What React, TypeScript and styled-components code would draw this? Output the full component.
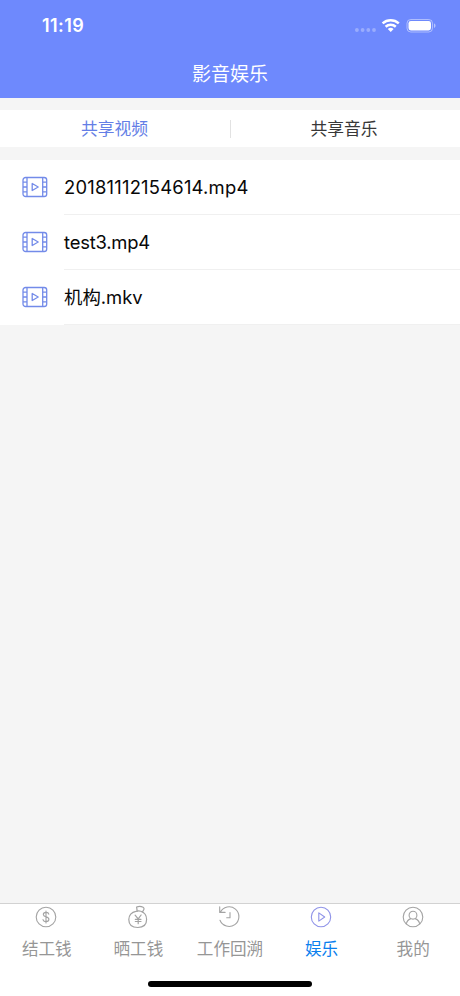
import React from 'react';
import styled, { createGlobalStyle } from 'styled-components';

const GlobalStyle = createGlobalStyle`
  * { box-sizing: border-box; }
  body { margin: 0; background: #f5f5f5; }
`;

const Screen = styled.div`
  width: 460px;
  height: 996px;
  display: flex;
  flex-direction: column;
  overflow: hidden;
  background: #f5f5f5;
  font-family: Inter, 'Noto Sans CJK SC', sans-serif;
  white-space: nowrap;
`;

const Header = styled.header`
  height: 98px;
  flex: none;
  background: #6e89fd;
  color: #fff;
`;

const StatusBar = styled.div`
  height: 50px;
  padding: 1px 24px 0 42px;
  display: flex;
  align-items: center;
  justify-content: space-between;
`;

const Clock = styled.span`
  font-size: 18px;
  line-height: 22px;
  font-weight: 600;
  letter-spacing: 0.4px;
`;

const Title = styled.h1`
  margin: 0;
  height: 48px;
  font-size: 19px;
  font-weight: 400;
  line-height: 49px;
  text-align: center;
`;

const Segments = styled.nav`
  flex: none;
  height: 37px;
  margin: 12px 0 13px;
  display: grid;
  grid-template-columns: 230px 1px 1fr;
  align-items: center;
  background: #fff;
`;

const Segment = styled.div<{ $active?: boolean }>`
  text-align: center;
  font-size: 16.8px;
  line-height: 35px;
  padding-top: 2px;
  padding-right: ${p => (p.$active ? '1px' : '3px')};
  color: ${p => (p.$active ? '#647ee6' : '#383838')};
`;

const Divider = styled.span`
  width: 1px;
  height: 18px;
  background: #e2e2e2;
`;

const FileList = styled.main`
  flex: none;
  background: #fff;
`;

const FileRow = styled.div`
  height: 55px;
  display: flex;
  align-items: stretch;
`;

const FileIcon = styled.span`
  width: 64px;
  padding: 16px 0 0 22px;
`;

const FileName = styled.span<{ $tracking: number }>`
  flex: 1;
  border-bottom: 1px solid #f0f0f0;
  font-size: 18.4px;
  line-height: 55px;
  letter-spacing: ${p => p.$tracking}px;
  color: #080808;
`;

const Footer = styled.footer`
  margin-top: auto;
  flex: none;
  height: 93px;
  border-top: 1px solid #d2d2d2;
  background: #fff;
`;

const TabRow = styled.nav`
  display: grid;
  grid-template-columns: repeat(5, 1fr);
  height: 77px;
  padding: 0 1px;
`;

const Tab = styled.div<{ $active?: boolean }>`
  display: flex;
  flex-direction: column;
  align-items: center;
  color: ${p => (p.$active ? '#0a80ee' : '#969696')};
  font-size: 16.6px;
  line-height: 24px;
  svg {
    margin: 1px 1px 8px 0;
    color: ${p => (p.$active ? '#8f93e8' : '#a3a3a3')};
  }
`;

const HomeBar = styled.div`
  width: 164px;
  height: 6px;
  margin: 0 auto;
  border-radius: 3px;
  background: #000;
`;

const StatusIcons = () => (
  <svg width="82" height="18" viewBox="0 0 82 18" fill="#fff">
    <g opacity=".3">
      <circle cx="2.9" cy="13" r="1.9" /><circle cx="8.6" cy="13" r="1.9" />
      <circle cx="14.3" cy="13" r="1.9" /><circle cx="20" cy="13" r="1.9" />
    </g>
    <g fill="none" stroke="#fff" strokeWidth="2.5">
      <path d="M28.6 6.4a12.1 12.1 0 0 1 16.2 0" />
      <path d="M31.6 9.8a7.7 7.7 0 0 1 10.2 0" />
    </g>
    <path d="M33.8 12a4.5 4.5 0 0 1 5.8 0l-2.9 3z" />
    <rect x="53" y="2.5" width="25.5" height="12.5" rx="3.8" fill="none" stroke="#fff" opacity=".45" />
    <rect x="54.5" y="4" width="22.5" height="9.5" rx="2.4" />
    <path d="M80 6.6c2 .7 2 3.6 0 4.3z" opacity=".5" />
  </svg>
);

const FilmIcon = () => (
  <svg width="26" height="22" viewBox="0 0 26 22" fill="none" stroke="#738be9" strokeWidth="1.3" strokeLinejoin="round">
    <rect x="1" y="1.5" width="23.7" height="19" rx="2.6" />
    <path d="M5 1.5v19M20.7 1.5v19M1 6.2h4M1 11h4M1 15.8h4M20.7 6.2h4M20.7 11h4M20.7 15.8h4" />
    <path d="M10.2 7.5v7l6-3.5z" />
  </svg>
);

const iconProps = {
  width: 24, height: 24, viewBox: '0 0 24 24', fill: 'none',
  stroke: 'currentColor', strokeWidth: 1.1,
  strokeLinecap: 'round' as const, strokeLinejoin: 'round' as const,
};

const DollarIcon = () => (
  <svg {...iconProps}>
    <circle cx="12" cy="12" r="9.8" />
    <path d="M12 6v12M14.8 9.2c-.2-1.2-1.3-1.8-2.8-1.8s-2.7.8-2.7 2.1c0 3.1 5.6 1.6 5.6 4.8 0 1.4-1.2 2.3-2.9 2.3s-2.8-.8-3-2.1" />
  </svg>
);

const MoneyBagIcon = () => (
  <svg {...iconProps} strokeWidth={1.2}>
    <path d="M9.9 6.3C5.5 7 2.8 10.6 2.8 14.5c0 5 3.1 8 9 8s8.8-3.2 8.8-8c0-3.7-2.3-7-5.8-8.2-1.4-.5-3.2-.4-4.9 0z" />
    <path d="M11.2 6.1 10.6 2c2.2-.8 4.4-.8 6.5.3 1.3.8 1.1 2.2.2 3.3l-1 1.3" />
    <path d="m9.1 10.2 3.1 3.7 2.9-3.9M12.2 13.9v4.8M9.3 14.3h5.7M9.3 16.5h5.7" />
  </svg>
);

const HistoryIcon = () => (
  <svg {...iconProps}>
    <path d="M3.3 7.3A9.8 9.8 0 1 1 3 15.3M2.7 1.8v5.6h5.4M13 7.5v5.3H9.7" />
  </svg>
);

const PlayIcon = () => (
  <svg {...iconProps}>
    <circle cx="12" cy="12" r="9.7" />
    <path d="M9.8 7.9v8.2l5.9-4.1z" />
  </svg>
);

const UserIcon = () => (
  <svg {...iconProps}>
    <circle cx="12" cy="12" r="9.8" />
    <circle cx="12" cy="10.2" r="3.9" />
    <path d="M5.4 18.6c.6-2.8 2.2-4.3 4.5-5M18.6 18.6c-.6-2.8-2.2-4.3-4.5-5" />
  </svg>
);

const files = [
  { name: '20181112154614.mp4', tracking: 0.22 },
  { name: 'test3.mp4', tracking: -0.2 },
  { name: '机构.mkv', tracking: 0 },
];
const tabs = [
  { label: '结工钱', Icon: DollarIcon },
  { label: '晒工钱', Icon: MoneyBagIcon },
  { label: '工作回溯', Icon: HistoryIcon },
  { label: '娱乐', Icon: PlayIcon, active: true },
  { label: '我的', Icon: UserIcon },
];

export default function App() {
  return (
    <Screen>
      <GlobalStyle />
      <Header>
        <StatusBar><Clock>11:19</Clock><StatusIcons /></StatusBar>
        <Title>影音娱乐</Title>
      </Header>
      <Segments>
        <Segment $active>共享视频</Segment>
        <Divider />
        <Segment>共享音乐</Segment>
      </Segments>
      <FileList>
        {files.map(({ name, tracking }) => (
          <FileRow key={name}>
            <FileIcon><FilmIcon /></FileIcon>
            <FileName $tracking={tracking}>{name}</FileName>
          </FileRow>
        ))}
      </FileList>
      <Footer>
        <TabRow>
          {tabs.map(({ label, Icon, active }) => (
            <Tab key={label} $active={active}><Icon />{label}</Tab>
          ))}
        </TabRow>
        <HomeBar />
      </Footer>
    </Screen>
  );
}
